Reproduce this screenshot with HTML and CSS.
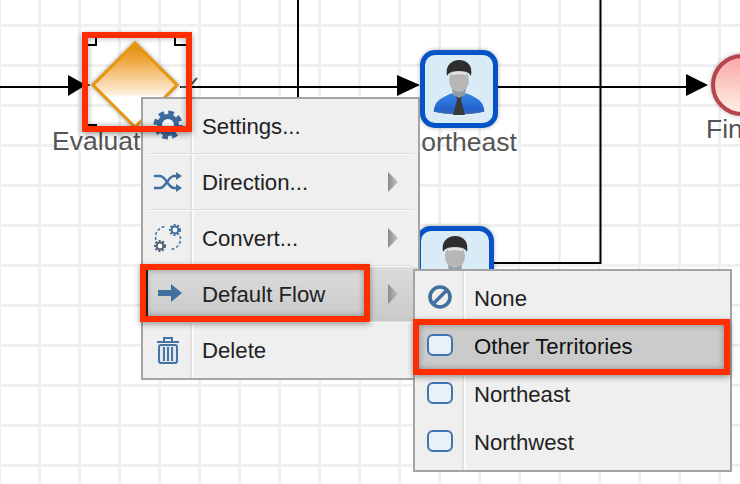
FILE: index.html
```html
<!DOCTYPE html>
<html lang="en">
<head>
    <meta charset="UTF-8">
    <title>Process Definition Designer</title>
    <link rel="stylesheet" href="styles.css">
</head>
<body>
    <svg width="0" height="0" class="defs">
        <defs>
            <linearGradient id="diamondFill" x1="0" y1="0" x2="0" y2="1">
                <stop offset="0" stop-color="#df8a06"/>
                <stop offset="0.2" stop-color="#efa63d"/>
                <stop offset="0.62" stop-color="#fdf1e2"/>
                <stop offset="0.63" stop-color="#ffffff"/>
            </linearGradient>
            <linearGradient id="endFill" x1="0" y1="0" x2="0" y2="1">
                <stop offset="0" stop-color="#fba5a5"/>
                <stop offset="1" stop-color="#fdf3e6"/>
            </linearGradient>
            <linearGradient id="caretFill" x1="0" y1="0" x2="1" y2="0">
                <stop offset="0" stop-color="#8a8a8a"/>
                <stop offset="1" stop-color="#c4c4c4"/>
            </linearGradient>
            <linearGradient id="shirtFill" x1="0" y1="0" x2="0" y2="1">
                <stop offset="0" stop-color="#3a86e6"/>
                <stop offset="0.75" stop-color="#2262cc"/>
                <stop offset="1" stop-color="#4a6fa8"/>
            </linearGradient>
            <symbol id="person" viewBox="0 0 54 56">
                <path d="M1 52 C2 43 5 39 19 33 L35 33 C49 39 52 43 53 52 C40 56 14 56 1 52 Z" fill="url(#shirtFill)" stroke="#eef6fc" stroke-width="1"/>
                <path d="M23 34 L31 34 L29 40 L33 55 L21 55 L25 40 Z" fill="#3a3a3a"/>
                <path d="M20 29 L34 29 L33 35 L27 38 L21 35 Z" fill="#8d9aa8"/>
                <ellipse cx="27" cy="20" rx="10" ry="12" fill="#b6b6b6"/>
                <path d="M19 13 C22 11 32 11 35 13 L34 15 C31 14 23 14 20 15 Z" fill="#e4e4e4"/>
                <path d="M15 16 C13 5 20 0 27 0 C35 0 41 5 39 16 C37 12 33 11 27 11 C21 11 17 12 15 16 Z" fill="#2e2e2e"/>
            </symbol>
            <symbol id="mini-task" viewBox="0 0 28 24">
                <rect x="2" y="2" width="24" height="20" rx="5" fill="#e9f0fa" stroke="#3f74b3" stroke-width="2"/>
            </symbol>
            <symbol id="caret" viewBox="0 0 12 20">
                <path d="M1 0 L11 10 L1 20 Z" fill="url(#caretFill)"/>
            </symbol>
        </defs>
    </svg>

    <div class="canvas">
        <!-- connectors and the gateway -->
        <svg class="diagram" width="740" height="484" viewBox="0 0 740 484">
            <path d="M0 87 H70 M180 87 H400 M497 87 H690 M298 0 V97 M600.5 0 V263 H490" class="flow"/>
            <path d="M68 75 L86 85 L68 96 Z M397 75 L420 85 L397 96 Z M686 74 L708 85 L686 96 Z"/>
            <path d="M87 85 H90 M181 87 H186 M188 88 L197 78" class="stub"/>
            <path d="M135 43 L177 85 L135 127 L93 85 Z" class="gateway"/>
            <path d="M87 34 H96 V45 H87 M186 37 H175 V45 H186 M87 125 H96 V132" class="handle"/>
            <circle cx="742" cy="85" r="29" class="end"/>
        </svg>

        <div class="task task-one">
            <svg width="54" height="56"><use href="#person"/></svg>
        </div>
        <div class="task task-two">
            <svg width="54" height="56"><use href="#person"/></svg>
        </div>

        <div class="label label-evaluate">Evaluate</div>
        <div class="label label-northeast">Northeast</div>
        <div class="label label-finish">Finish</div>

        <div class="menu menu-main">
            <div class="item">
                <div class="item-icon icon-up">
                    <svg width="30" height="30" viewBox="0 0 30 30">
                        <circle cx="15" cy="15" r="12.5" fill="none" stroke="#3b6b9f" stroke-width="4" stroke-dasharray="5.6 4.2"/>
                        <circle cx="15" cy="15" r="8.5" fill="#fff" stroke="#3b6b9f" stroke-width="5"/>
                    </svg>
                </div>
                <span class="item-text">Settings...</span>
            </div>
            <div class="sep"></div>
            <div class="item">
                <div class="item-icon">
                    <svg width="30" height="20" viewBox="0 0 30 20">
                        <path d="M1 4 H7 C13 4 15 16 21 16 H25 M1 16 H7 C13 16 15 4 21 4 H25" fill="none" stroke="#3f6f9f" stroke-width="2.4"/>
                        <path d="M23 0 L29 4 L23 8 Z M23 12 L29 16 L23 20 Z" fill="#3f6f9f"/>
                    </svg>
                </div>
                <span class="item-text">Direction...</span>
                <svg class="caret" width="12" height="20"><use href="#caret"/></svg>
            </div>
            <div class="sep"></div>
            <div class="item">
                <div class="item-icon">
                    <svg width="30" height="30" viewBox="0 0 30 30">
                        <path d="M3 17 C1 10 5 5 13 3 M27 13 C29 20 25 25 17 27" fill="none" stroke="#4b7bad" stroke-width="1.6" stroke-dasharray="3 2"/>
                        <circle cx="22" cy="7" r="5" fill="none" stroke="#3f6f9f" stroke-width="2" stroke-dasharray="2 1.6"/>
                        <circle cx="22" cy="7" r="3.4" fill="#fff" stroke="#3f6f9f" stroke-width="2"/>
                        <circle cx="7" cy="23" r="5" fill="none" stroke="#4d6074" stroke-width="2" stroke-dasharray="2 1.6"/>
                        <circle cx="7" cy="23" r="3.4" fill="#fff" stroke="#4d6074" stroke-width="2"/>
                    </svg>
                </div>
                <span class="item-text">Convert...</span>
                <svg class="caret" width="12" height="20"><use href="#caret"/></svg>
            </div>
            <div class="sep"></div>
            <div class="item item-active">
                <div class="item-icon icon-up">
                    <svg width="26" height="20" viewBox="0 0 26 20">
                        <path d="M1 7 H14 V1 L25 10 L14 19 V13 H1 Z" fill="#41709f"/>
                    </svg>
                </div>
                <span class="item-text">Default Flow</span>
                <svg class="caret" width="12" height="20"><use href="#caret"/></svg>
            </div>
            <div class="sep"></div>
            <div class="item">
                <div class="item-icon">
                    <svg width="24" height="28" viewBox="0 0 24 28">
                        <path d="M1 6 H23 M8 5 V2 H16 V5" fill="none" stroke="#46739f" stroke-width="2"/>
                        <rect x="3" y="9" width="18" height="18" rx="2" fill="#dfe8f2" stroke="#46739f" stroke-width="2"/>
                        <path d="M8 11 V25 M12 11 V25 M16 11 V25" stroke="#46739f" stroke-width="2"/>
                    </svg>
                </div>
                <span class="item-text">Delete</span>
            </div>
        </div>

        <div class="menu menu-sub">
            <div class="sub-item">
                <div class="item-icon icon-up">
                    <svg width="26" height="26" viewBox="0 0 26 26">
                        <circle cx="13" cy="13" r="10" fill="none" stroke="#41709f" stroke-width="3.6"/>
                        <path d="M7 19 L19 7" stroke="#41709f" stroke-width="3.5"/>
                    </svg>
                </div>
                <span class="item-text">None</span>
            </div>
            <div class="sub-item sub-item-active">
                <div class="item-icon icon-up"><svg width="28" height="24"><use href="#mini-task"/></svg></div>
                <span class="item-text">Other Territories</span>
            </div>
            <div class="sub-item">
                <div class="item-icon icon-up"><svg width="28" height="24"><use href="#mini-task"/></svg></div>
                <span class="item-text">Northeast</span>
            </div>
            <div class="sub-item">
                <div class="item-icon icon-up"><svg width="28" height="24"><use href="#mini-task"/></svg></div>
                <span class="item-text">Northwest</span>
            </div>
        </div>

        <!-- red callouts drawn over the screenshot -->
        <div class="callout callout-gateway"></div>
        <div class="callout callout-flow"></div>
        <div class="callout callout-target"></div>
    </div>
</body>
</html>
```

FILE: styles.css
```css
body {
    margin: 0;
    font-family: "Liberation Sans", Arial, sans-serif;
}

.defs {
    position: absolute;
}

.canvas {
    position: relative;
    width: 740px;
    height: 484px;
    overflow: hidden;
    background-color: #fff;
    background-image:
        linear-gradient(to right, #f0f0f0 3px, transparent 3px),
        linear-gradient(to bottom, #f0f0f0 3px, transparent 3px);
    background-size: 40px 40px;
    background-position: -2px 24px;
}

.diagram {
    position: absolute;
    left: 0;
    top: 0;
}

.flow {
    fill: none;
    stroke: #000;
    stroke-width: 2;
}

.stub {
    fill: none;
    stroke: #555;
    stroke-width: 2;
}

.gateway {
    fill: url(#diamondFill);
    stroke: #e8960f;
    stroke-width: 3;
    filter: drop-shadow(0 0 2px rgba(0, 0, 0, 0.4));
}

.handle {
    fill: none;
    stroke: #000;
    stroke-width: 2;
}

.end {
    fill: url(#endFill);
    stroke: #b5444c;
    stroke-width: 4;
    filter: drop-shadow(0 0 2px rgba(0, 0, 0, 0.3));
}

.task {
    position: absolute;
    box-sizing: border-box;
    width: 78px;
    height: 78px;
    border: 5px solid #0454c8;
    border-radius: 15px;
    background: #d9ebf7;
    box-shadow: 0 0 4px rgba(0, 0, 0, 0.3);
    display: flex;
    justify-content: center;
    padding-top: 5px;
}

.task-one {
    left: 420px;
    top: 50px;
}

.task-two {
    left: 416px;
    top: 226px;
}

.label {
    position: absolute;
    font-size: 26.5px;
    line-height: 30px;
    color: #555;
}

.label-evaluate {
    left: 52px;
    top: 126px;
}

.label-northeast {
    left: 402px;
    top: 127px;
}

.label-finish {
    left: 706px;
    top: 114px;
}

.menu {
    position: absolute;
    box-sizing: border-box;
    border: 2px solid #a4a4a4;
    background-color: #efefef;
    background-image: linear-gradient(to right,
        transparent 47px, #e2e2e2 47px, #e2e2e2 49px,
        #fbfbfb 49px, #fbfbfb 51px, transparent 51px);
    color: #222;
    font-size: 22.2px;
}

.menu-main {
    left: 141px;
    top: 97px;
    width: 279px;
    height: 283px;
}

.menu-sub {
    left: 413px;
    top: 269px;
    width: 319px;
    height: 203px;
    padding-top: 3px;
}

.item {
    display: flex;
    align-items: center;
    height: 54px;
}

.sub-item {
    display: flex;
    align-items: center;
    height: 48px;
}

.item-icon {
    flex: 0 0 49px;
    display: flex;
    justify-content: center;
    align-items: center;
    margin-right: 10px;
}

.icon-up {
    margin-bottom: 3px;
}

.item-text {
    flex: 1;
    padding-top: 2px;
}

.caret {
    margin-right: 19px;
}

.sep {
    height: 2px;
    margin: 0 5px;
    background: linear-gradient(to bottom, #dddddd 50%, #fafafa 50%);
}

.item-active {
    margin-left: 3px;
    border-left: 2px solid #222;
    background: linear-gradient(to bottom, #dcdcdc, #c9c9c9);
}

.item-active .item-icon {
    flex-basis: 44px;
}

.sub-item-active {
    background: #cbcbcb;
    color: #111;
}

.callout {
    position: absolute;
    box-sizing: border-box;
    border: 6px solid #ff2d00;
    box-shadow: 0 2px 6px rgba(0, 0, 0, 0.4), inset 0 0 6px rgba(0, 0, 0, 0.35);
}

.callout-gateway {
    left: 82px;
    top: 32px;
    width: 110px;
    height: 100px;
}

.callout-flow {
    left: 140px;
    top: 264px;
    width: 230px;
    height: 58px;
}

.callout-target {
    left: 413px;
    top: 319px;
    width: 317px;
    height: 56px;
}
```
